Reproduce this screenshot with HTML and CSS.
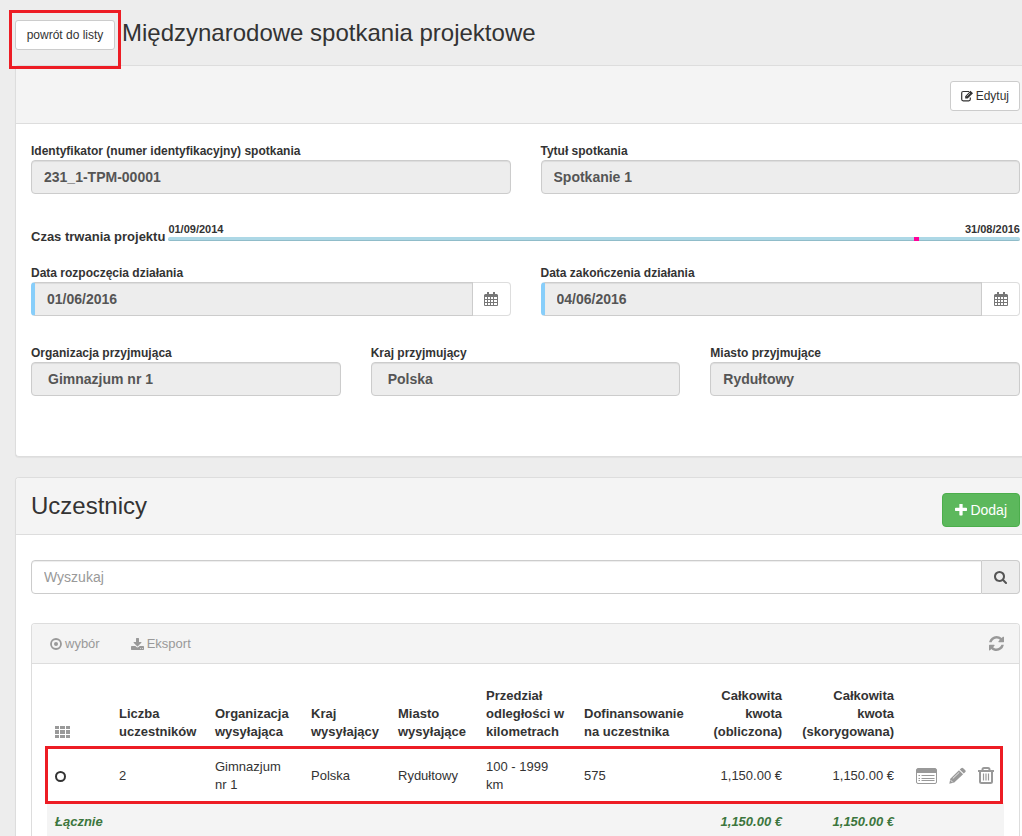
FILE: index.html
```html
<!DOCTYPE html>
<html lang="pl">
<head>
<meta charset="utf-8">
<title>Międzynarodowe spotkania projektowe</title>
<link rel="stylesheet" href="styles.css">
</head>
<body>
<header class="page-header">
  <div class="back">
    <button class="btn btn-sm btn-back" type="button">powrót do listy</button>
    <span class="mark mark-back"></span>
  </div>
  <h1 class="title">Międzynarodowe spotkania projektowe</h1>
</header>

<section class="panel">
  <div class="panel-head panel-head-end">
    <button class="btn btn-sm" type="button"><svg class="ico-edit" viewBox="0 0 12 12"><path d="M8 1.500H2.200Q.7 1.500.7 3V9.300Q.7 10.800 2.200 10.800H7.800Q9.300 10.800 9.300 9.300V7.500" fill="none" stroke="currentColor" stroke-width="1.200"/><path d="M4.200 6.300 9.400.8 12 3.200 6.700 8.600H4.200z" fill="currentColor"/><path d="M5.800 6.300 9 3" stroke="#fff" stroke-width=".6"/></svg>Edytuj</button>
  </div>
  <form class="panel-body details">
    <div class="grid two">
      <div class="field"><label for="ident">Identyfikator (numer identyfikacyjny) spotkania</label><input class="control" id="ident" value="231_1-TPM-00001" readonly></div>
      <div class="field"><label for="name">Tytuł spotkania</label><input class="control" id="name" value="Spotkanie 1" readonly></div>
    </div>
    <div class="timeline">
      <span class="timeline-label">Czas trwania projektu</span>
      <div class="timeline-track">
        <div class="timeline-dates"><span>01/09/2014</span><span>31/08/2016</span></div>
        <div class="bar"><span class="bar-point" style="left:87.500%"></span></div>
      </div>
    </div>
    <div class="grid two">
      <div class="field"><label for="start">Data rozpoczęcia działania</label>
        <div class="group"><input class="control required" id="start" value="01/06/2016" readonly><button class="addon" type="button" aria-label="Kalendarz"><svg class="ico-cal" viewBox="0 0 14 14"><path d="M1 2h12v3H1zM3 0h2v3H3zM9 0h2v3H9z" fill="currentColor"/><path d="M.5 2.500V13.500H13.500V2.500M.5 7.500H13M.5 10.500H13M3.500 5V13M6.500 5V13M9.500 5V13" fill="none" stroke="currentColor"/></svg></button></div></div>
      <div class="field"><label for="end">Data zakończenia działania</label>
        <div class="group"><input class="control required" id="end" value="04/06/2016" readonly><button class="addon" type="button" aria-label="Kalendarz"><svg class="ico-cal" viewBox="0 0 14 14"><path d="M1 2h12v3H1zM3 0h2v3H3zM9 0h2v3H9z" fill="currentColor"/><path d="M.5 2.500V13.500H13.500V2.500M.5 7.500H13M.5 10.500H13M3.500 5V13M6.500 5V13M9.500 5V13" fill="none" stroke="currentColor"/></svg></button></div></div>
    </div>
    <div class="grid three">
      <div class="field"><label for="org">Organizacja przyjmująca</label><input class="control inset" id="org" value="Gimnazjum nr 1" readonly></div>
      <div class="field"><label for="country">Kraj przyjmujący</label><input class="control inset" id="country" value="Polska" readonly></div>
      <div class="field"><label for="city">Miasto przyjmujące</label><input class="control" id="city" value="Rydułtowy" readonly></div>
    </div>
  </form>
</section>

<section class="panel panel-last">
  <div class="panel-head">
    <h2 class="title">Uczestnicy</h2>
    <button class="btn btn-add" type="button"><svg class="ico-plus" viewBox="192 192 1408 1408"><path fill="currentColor" d="M1600 736v192q0 40-28 68t-68 28h-416v416q0 40-28 68t-68 28h-192q-40 0-68-28t-28-68v-416h-416q-40 0-68-28t-28-68v-192q0-40 28-68t68-28h416v-416q0-40 28-68t68-28h192q40 0 68 28t28 68v416h416q40 0 68 28t28 68z"/></svg>Dodaj</button>
  </div>
  <div class="panel-body list">
    <div class="group">
      <input class="control search" type="search" placeholder="Wyszukaj" aria-label="Wyszukaj">
      <button class="addon addon-search" type="button" aria-label="Szukaj"><svg class="ico-search" viewBox="64 128 1664 1664"><path fill="currentColor" d="M1216 832q0-185-131.500-316.500t-316.500-131.500-316.500 131.500-131.500 316.500 131.500 316.500 316.500 131.500 316.500-131.500 131.500-316.500zm512 832q0 52-38 90t-90 38q-54 0-90-38l-343-342q-179 124-399 124-143 0-273.500-55.500t-225-150-150-225-55.500-273.500 55.500-273.500 150-225 225-150 273.500-55.500 273.500 55.500 225 150 150 225 55.500 273.500q0 220-124 399l343 343q37 37 37 90z"/></svg></button>
    </div>
    <div class="box">
      <div class="toolbar">
        <button class="tool" type="button"><svg class="ico-dot" viewBox="0 0 12 12"><circle cx="6" cy="6" r="5" fill="none" stroke="currentColor" stroke-width="1.800"/><circle cx="6" cy="6" r="2" fill="currentColor"/></svg>wybór</button>
        <button class="tool" type="button"><svg class="ico-down" viewBox="64 0 1664 1536"><path fill="currentColor" d="M1344 1344q0-26-19-45t-45-19-45 19-19 45 19 45 45 19 45-19 19-45zm256 0q0-26-19-45t-45-19-45 19-19 45 19 45 45 19 45-19 19-45zm128-224v320q0 40-28 68t-68 28h-1472q-40 0-68-28t-28-68v-320q0-40 28-68t68-28h465l135 136q58 56 136 56t136-56l136-136h464q40 0 68 28t28 68zm-325-569q17 41-14 70l-448 448q-18 19-45 19t-45-19l-448-448q-31-29-14-70 17-39 59-39h256v-448q0-26 19-45t45-19h256q26 0 45 19t19 45v448h256q42 0 59 39z"/></svg>Eksport</button>
        <button class="tool tool-end" type="button" aria-label="Odśwież"><svg class="ico-refresh" viewBox="128 128 1536 1536"><path fill="currentColor" d="M1639 1056q0 5-1 7-64 268-268 434.500t-478 166.500q-146 0-282.500-55t-243.500-157l-129 129q-19 19-45 19t-45-19-19-45v-448q0-26 19-45t45-19h448q26 0 45 19t19 45-19 45l-137 137q71 66 161 102t187 36q134 0 250-65t186-179q11-17 53-117 8-23 30-23h192q13 0 22.500 9.500t9.500 22.500zm25-800v448q0 26-19 45t-45 19h-448q-26 0-45-19t-19-45 19-45l138-138q-148-137-349-137-134 0-250 65t-186 179q-11 17-53 117-8 23-30 23h-199q-13 0-22.500-9.500t-9.500-22.500v-7q65-268 270-434.500t480-166.500q146 0 284 55.500t245 156.500l130-129q19-19 45-19t45 19 19 45z"/></svg></button>
      </div>
      <table class="table">
        <colgroup><col class="c-pick"><col class="c-96"><col class="c-96"><col class="c-87"><col class="c-88"><col class="c-98"><col class="c-fund"><col class="c-88"><col class="c-corr"><col class="c-act"></colgroup>
        <thead>
          <tr>
            <th><svg class="ico-grid" viewBox="0 0 15 12"><path fill="currentColor" d="M0 0h4v3H0zM5 0h5v3H5zM11 0h4v3h-4zM0 4h4v4H0zM5 4h5v4H5zM11 4h4v4h-4zM0 9h4v3H0zM5 9h5v3H5zM11 9h4v3h-4z"/></svg></th>
            <th>Liczba uczestników</th>
            <th>Organizacja wysyłająca</th>
            <th>Kraj wysyłający</th>
            <th>Miasto wysyłające</th>
            <th>Przedział odległości w kilometrach</th>
            <th>Dofinansowanie na uczestnika</th>
            <th class="num">Całkowita kwota (obliczona)</th>
            <th class="num">Całkowita<br>kwota (skorygowana)</th>
            <th></th>
          </tr>
        </thead>
        <tbody>
          <tr class="row">
            <td><input class="pick" type="radio" name="participant" aria-label="Wybierz"><span class="mark mark-row"></span></td>
            <td>2</td>
            <td>Gimnazjum nr 1</td>
            <td>Polska</td>
            <td>Rydułtowy</td>
            <td>100 - 1999<br>km</td>
            <td>575</td>
            <td class="num">1,150.00 €</td>
            <td class="num">1,150.00 €</td>
            <td class="act"><div class="actions">
              <button class="tool" type="button" aria-label="Szczegóły"><svg class="ico-list" viewBox="0 0 21 16"><rect x=".5" y=".5" width="20" height="15" rx="1.500" fill="none" stroke="currentColor"/><path d="M1 1h19v4H1z" fill="currentColor"/><path d="M2.500 7.500H4M2.500 10.500H4M2.500 12.500H4M5.500 7.500H18.500M5.500 10.500H18.500M5.500 12.500H18.500" stroke="currentColor"/></svg></button>
              <button class="tool" type="button" aria-label="Edytuj"><svg class="ico-pencil" viewBox="0 0 17 17"><path fill="currentColor" d="M12.200 1.200Q13.200.2 14.200 1.200L16.300 3.300Q17.100 4.200 16.300 5L14.800 6.500 10.700 2.600zM10 3.300 14.100 7.300 5.300 15.600.3 16.700 1.300 11.800z"/><path d="M3.800 11.500 10.300 5.300" stroke="#fff" stroke-width=".8"/><path d="M1.700 13.200 3.700 15.300" stroke="#fff" stroke-width=".8"/></svg></button>
              <button class="tool" type="button" aria-label="Usuń"><svg class="ico-trash" viewBox="0 0 16 17"><path d="M0 4h16M4.500 4V2.500Q4.500 1 6 1H10Q11.500 1 11.500 2.500V4M2 4V14.500Q2 16 3.500 16H12.500Q14 16 14 14.500V4" fill="none" stroke="currentColor" stroke-width="2"/><path d="M5.500 6.500V13.500M8 6.500V13.500M10.500 6.500V13.500" stroke="currentColor" stroke-width="1.200"/></svg></button>
            </div></td>
          </tr>
        </tbody>
        <tfoot>
          <tr class="total">
            <td colspan="7">Łącznie</td>
            <td class="num">1,150.00 €</td>
            <td class="num">1,150.00 €</td>
            <td></td>
          </tr>
        </tfoot>
      </table>
    </div>
  </div>
</section>
</body>
</html>
```
FILE: styles.css
```css
* { box-sizing: border-box; }
body {
  margin: 0;
  padding-left: 15px;
  background: #ededed;
  color: #333;
  font: 13px/18px "Liberation Sans", Arial, sans-serif;
}
button, input { font: inherit; color: inherit; margin: 0; }
button { cursor: pointer; }
svg { display: block; flex: none; }

.page-header { display: flex; align-items: flex-start; gap: 7px; height: 65px; padding-top: 20px; }
.title { margin: 0; font-size: 24px; line-height: 26px; font-weight: 400; }
.back { position: relative; }
.mark { position: absolute; border: 3px solid #ed1c24; pointer-events: none; }
.mark-back { top: -10px; bottom: -19px; left: -6px; right: -6px; }
.mark-row { top: -2px; bottom: -1px; left: -2px; right: 1px; }

.btn {
  display: flex; align-items: center; justify-content: center; gap: 3px;
  border: 1px solid #ccc; border-radius: 4px; background: #fff;
  white-space: nowrap;
}
.btn-sm { height: 30px; padding: 0 10px; font-size: 12px; border-radius: 3px; }
.btn-back { min-width: 100px; }
.btn-add { height: 34px; padding: 0 12px; font-size: 14px; color: #fff; background: #5cb85c; border-color: #4cae4c; }

.panel {
  margin-bottom: 20px;
  border: 1px solid #ddd; border-right: 0;
  border-radius: 4px 0 0 4px;
  background: #fff;
  box-shadow: 0 1px 1px rgba(0, 0, 0, .05);
}
.panel-last { margin-bottom: 0; border-bottom: 0; border-bottom-left-radius: 0; }
.panel-head {
  display: flex; justify-content: space-between; align-items: flex-start;
  padding: 15px 2px 7px 15px;
  background: #f4f4f4; border-bottom: 1px solid #ddd; border-top-left-radius: 3px;
}
.panel-head-end { justify-content: flex-end; padding-bottom: 12px; }
.panel-body { padding: 18px 2px 0 15px; }
.details { padding-bottom: 60px; }
.list { padding-top: 25px; }

.grid { display: grid; gap: 30px; }
.two { grid-template-columns: repeat(2, minmax(0, 1fr)); }
.three { grid-template-columns: repeat(3, minmax(0, 1fr)); margin-top: 28px; }
.field label { display: block; font-size: 12px; line-height: 18px; font-weight: 700; }
.control {
  display: block; width: 100%; height: 34px; padding: 0 12px;
  border: 1px solid #ccc; border-radius: 4px; background: #ededed;
  box-shadow: inset 0 1px 1px rgba(0, 0, 0, .075);
  color: #555; font-size: 14px; font-weight: 700; outline: 0;
}
.inset { padding-left: 16px; }
.required { border-left: 4px solid #87cefa; }
.group { display: flex; }
.group .control { flex: 1; min-width: 0; border-top-right-radius: 0; border-bottom-right-radius: 0; }
.addon {
  display: flex; align-items: center; justify-content: center;
  width: 38px; height: 34px; padding: 0;
  border: 1px solid #ddd; border-left: 0; border-radius: 0 4px 4px 0;
  background: #fff; color: #777;
}
.search { background: #fff; font-weight: 400; appearance: none; }
.search::placeholder { color: #999; }
.addon-search { background: #ededed; border-color: #ccc; color: #555; }

.timeline { display: flex; align-items: flex-end; gap: 3px; margin: 28px 0 20px; }
.timeline-label { font-weight: 700; line-height: 14px; }
.timeline-track { flex: 1; padding-bottom: 3px; }
.timeline-dates { display: flex; justify-content: space-between; font-size: 11px; line-height: 14px; font-weight: 700; }
.bar { position: relative; height: 4px; margin-top: 1px; border-radius: 2px; background: #add8e6; border-bottom: 1px solid #90bcc9; }
.bar-point { position: absolute; top: 0; width: 5px; height: 4px; background: #f09; }

.box { margin-top: 29px; border: 1px solid #ddd; border-bottom: 0; border-radius: 4px 4px 0 0; }
.toolbar {
  display: flex; align-items: center; gap: 31px; height: 40px; padding: 0 15px 0 18px;
  background: #f4f4f4; border-bottom: 1px solid #ddd; border-radius: 3px 3px 0 0;
}
.tool { display: flex; align-items: center; gap: 3px; padding: 0; border: 0; background: none; color: #999; }
.tool-end { margin-left: auto; }

.table { width: calc(100% - 30px); margin: 15px 15px 0; table-layout: fixed; border-collapse: collapse; }
.c-pick { width: 64px; }
.c-96 { width: 96px; }
.c-87 { width: 87px; }
.c-88 { width: 88px; }
.c-98 { width: 98px; }
.c-fund { width: 126px; }
.c-corr { width: 112px; }
.c-act { width: 102px; }
.table th, .table td { padding: 8px; text-align: left; }
.table th { padding: 8px 0 7px 8px; vertical-align: bottom; font-weight: 700; }
.table td { padding-top: 10px; padding-bottom: 9px; }
.table .num { text-align: right; padding-left: 0; padding-right: 8px; }
.table .act { padding: 0 10px 0 14px; }
.row { position: relative; }
.actions { display: flex; align-items: center; justify-content: space-between; }
.table .total td { padding-bottom: 6px; background: #f4f4f4; color: #3c763d; font-weight: 700; font-style: italic; }
.pick {
  display: block; width: 11px; height: 11px; appearance: none;
  border: 2px solid #333; border-radius: 50%;
}

.ico-edit { width: 12px; height: 12px; }
.ico-cal { width: 14px; height: 14px; }
.ico-plus { width: 12px; height: 12px; }
.ico-search { width: 13px; height: 13px; }
.ico-dot { width: 12px; height: 12px; }
.ico-down { width: 13px; height: 12px; }
.ico-refresh { width: 15px; height: 15px; }
.ico-grid { width: 15px; height: 12px; color: #999; margin-bottom: 3px; }
.ico-list { width: 21px; height: 16px; }
.ico-pencil { width: 17px; height: 17px; }
.ico-trash { width: 16px; height: 17px; }
```
